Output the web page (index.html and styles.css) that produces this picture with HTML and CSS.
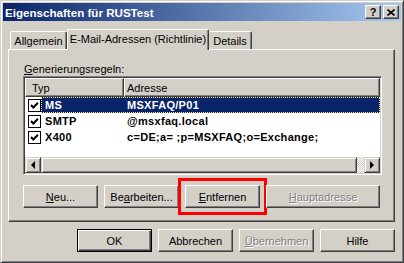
FILE: index.html
```html
<!DOCTYPE html>
<html lang="de">
<head>
  <meta charset="UTF-8" />
  <title>Eigenschaften für RUSTest</title>
  <link rel="stylesheet" href="styles.css">
</head>
<body>
  <div class="window">
    <div class="titlebar">
      <span class="title">Eigenschaften für RUSTest</span>
      <div class="caption-btns">
        <span class="cap-btn help">?</span>
        <span class="cap-btn">
          <svg width="8" height="7" viewBox="0 0 8 7"><path d="M0.5 0.5 L7.5 6.5 M7.5 0.5 L0.5 6.5" stroke="#000" stroke-width="1.6" fill="none"/></svg>
        </span>
      </div>
    </div>

    <div class="content">
      <div class="tabs">
        <div class="tab tab-general">Allgemein</div>
        <div class="tab tab-mail active">E-Mail-Adressen (Richtlinie)</div>
        <div class="tab tab-details">Details</div>
      </div>

      <div class="panel">
        <div class="label"><u>G</u>enerierungsregeln:</div>

        <div class="listview">
          <div class="lv-header">
            <div class="col col-type">Typ</div>
            <div class="col col-addr">Adresse</div>
          </div>
          <div class="lv-rows">
            <div class="row">
              <span class="check"><svg width="11" height="11" viewBox="0 0 11 11"><path d="M2 5 L4.3 7.5 L9 2.8" stroke="#000" stroke-width="2" fill="none"/></svg></span>
              <div class="item selected"><span class="cell-type">MS</span><span class="cell-addr">MSXFAQ/P01</span></div>
            </div>
            <div class="row">
              <span class="check"><svg width="11" height="11" viewBox="0 0 11 11"><path d="M2 5 L4.3 7.5 L9 2.8" stroke="#000" stroke-width="2" fill="none"/></svg></span>
              <div class="item"><span class="cell-type">SMTP</span><span class="cell-addr">@msxfaq.local</span></div>
            </div>
            <div class="row">
              <span class="check"><svg width="11" height="11" viewBox="0 0 11 11"><path d="M2 5 L4.3 7.5 L9 2.8" stroke="#000" stroke-width="2" fill="none"/></svg></span>
              <div class="item"><span class="cell-type">X400</span><span class="cell-addr">c=DE;a= ;p=MSXFAQ;o=Exchange;</span></div>
            </div>
          </div>
          <div class="hscroll">
            <span class="sb-btn"><span class="arrow-left"></span></span>
            <div class="sb-track"><span class="sb-thumb"></span></div>
            <span class="sb-btn"><span class="arrow-right"></span></span>
          </div>
        </div>

        <div class="btn-row">
          <button class="btn"><u>N</u>eu...</button>
          <button class="btn">Be<u>a</u>rbeiten...</button>
          <button class="btn marked"><u>E</u>ntfernen</button>
          <button class="btn wide disabled"><u>H</u>auptadresse</button>
        </div>
      </div>

      <div class="dialog-btns">
        <button class="btn default">OK</button>
        <button class="btn">Abbrechen</button>
        <button class="btn disabled"><u>Ü</u>bernehmen</button>
        <button class="btn">Hilfe</button>
      </div>
    </div>
  </div>
</body>
</html>
```

FILE: styles.css
```css
* { box-sizing: border-box; }
html, body { margin: 0; padding: 0; }
body {
  font-family: "Liberation Sans", Arial, sans-serif;
  font-size: 11px;
  color: #000;
  background: #d4d0c8;
}
.window {
  width: 404px;
  height: 263px;
  background: #d4d0c8;
  border: 1px solid;
  border-color: #d4d0c8 #404040 #404040 #d4d0c8;
  box-shadow: inset 1px 1px #fff, inset -1px -1px #808080;
  padding: 2px;
  display: flex;
  flex-direction: column;
}
.titlebar {
  height: 18px;
  background: linear-gradient(to right, #0a246a, #a6caf0);
  display: flex;
  align-items: center;
  justify-content: space-between;
  padding: 0 2px 0 2px;
}
.title {
  color: #fff;
  font-weight: bold;
  font-size: 11.6px;
}
.caption-btns {
  display: flex;
  gap: 2px;
}
.cap-btn {
  width: 16px;
  height: 14px;
  background: #d4d0c8;
  border: 1px solid;
  border-color: #fff #404040 #404040 #fff;
  box-shadow: inset -1px -1px #808080;
  display: flex;
  align-items: center;
  justify-content: center;
  font-weight: bold;
  font-size: 11px;
  line-height: 1;
}
.cap-btn svg { display: block; }

.content {
  flex: 1;
  padding: 8px 6px 8px 5px;
  display: flex;
  flex-direction: column;
}
.tabs {
  height: 20px;
  display: flex;
  align-items: flex-end;
  padding-left: 2px;
}
.tab {
  height: 18px;
  background: #d4d0c8;
  border: 1px solid;
  border-bottom: none;
  border-color: #fff #404040 #404040 #fff;
  border-radius: 2px 2px 0 0;
  box-shadow: inset -1px 0 #808080;
  display: flex;
  align-items: center;
  justify-content: center;
}
.tab-general { width: 57px; }
.tab-mail { width: 142px; }
.tab-details { width: 43px; }
.tab.active {
  height: 21px;
  margin-bottom: -1px;
  position: relative;
  z-index: 1;
  padding-bottom: 2px;
}
.tab-details { border-left: none; }

.panel {
  height: 173px;
  background: #d4d0c8;
  border: 1px solid;
  border-color: #fff #404040 #404040 #fff;
  box-shadow: inset -1px -1px #808080;
  padding: 13px 12px 0 14px;
}
.label {
  height: 13px;
  line-height: 13px;
  padding-left: 1px;
}

.listview {
  height: 99px;
  background: #fff;
  border: 1px solid;
  border-color: #808080 #fff #fff #808080;
  box-shadow: inset 1px 1px #404040, inset -1px -1px #d4d0c8;
  padding: 1px;
  display: flex;
  flex-direction: column;
}
.lv-header {
  height: 19px;
  display: flex;
}
.col {
  background: #d4d0c8;
  border: 1px solid;
  border-color: #fff #404040 #404040 #fff;
  box-shadow: inset -1px -1px #808080;
  display: flex;
  align-items: center;
}
.col-type { width: 99px; padding-left: 6px; }
.col-addr { flex: 1; padding-left: 2px; }
.lv-rows {
  flex: 1;
  font-weight: bold;
  letter-spacing: 0.3px;
}
.row {
  height: 16px;
  display: flex;
  align-items: center;
}
.check {
  width: 13px;
  height: 13px;
  margin-left: 3px;
  border: 1px solid #000;
  background: #fff;
  display: flex;
  align-items: center;
  justify-content: center;
}
.check svg { display: block; }
.item {
  flex: 1;
  height: 16px;
  display: flex;
  align-items: center;
}
.item.selected {
  background: #0a246a;
  color: #fff;
  outline: 1px dotted #f2f27a;
  outline-offset: -1px;
}
.cell-type { width: 80px; padding-left: 4px; }
.cell-addr { padding-left: 6px; }

.hscroll {
  height: 16px;
  display: flex;
}
.sb-btn, .sb-thumb {
  background: #d4d0c8;
  border: 1px solid;
  border-color: #d4d0c8 #404040 #404040 #d4d0c8;
  box-shadow: inset 1px 1px #fff, inset -1px -1px #808080;
}
.sb-btn {
  width: 16px;
  display: flex;
  align-items: center;
  justify-content: center;
}
.sb-track {
  flex: 1;
  display: flex;
  background: repeating-conic-gradient(#fff 0 25%, #d4d0c8 0 50%) 0 0 / 2px 2px;
}
.sb-thumb { width: 316px; }
.arrow-left, .arrow-right {
  width: 0;
  height: 0;
  border-top: 4px solid transparent;
  border-bottom: 4px solid transparent;
}
.arrow-left { border-right: 4px solid #000; }
.arrow-right { border-left: 4px solid #000; }

.btn {
  width: 75px;
  height: 23px;
  padding: 0;
  font: inherit;
  color: #000;
  background: #d4d0c8;
  border: 1px solid;
  border-color: #fff #404040 #404040 #fff;
  border-radius: 0;
  box-shadow: inset -1px -1px #808080;
}
.btn.wide { width: 114px; }
.btn.default {
  border-color: #000;
  box-shadow: inset 1px 1px #fff, inset -1px -1px #404040, inset -2px -2px #808080;
}
.btn.disabled {
  color: #808080;
  text-shadow: 1px 1px #fff;
}
.btn.marked {
  outline: 3px solid #f00;
  outline-offset: 4px;
}
.btn-row {
  display: flex;
  gap: 6px;
  margin-top: 10px;
}
.dialog-btns {
  display: flex;
  justify-content: flex-end;
  gap: 6px;
  margin-top: 7px;
}
```
